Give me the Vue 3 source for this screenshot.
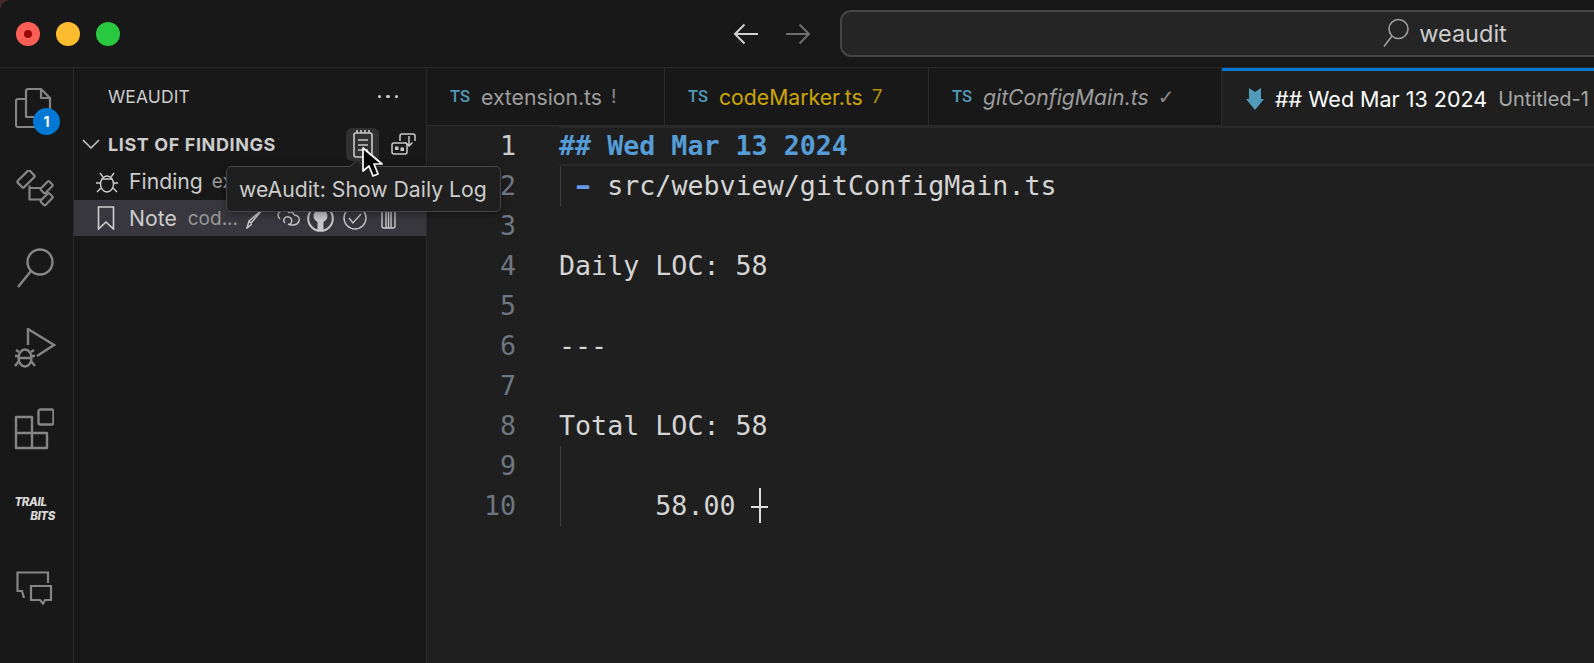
<script setup>
const tabs = [
  { name: 'extension.ts', mark: '!', kind: 'plain' },
  { name: 'codeMarker.ts', mark: '7', kind: 'warn' },
  { name: 'gitConfigMain.ts', mark: '✓', kind: 'preview' },
]
const lines = [
  { n: 1, text: '## Wed Mar 13 2024', kind: 'heading', active: true },
  { n: 2, text: 'src/webview/gitConfigMain.ts', kind: 'list', guide: true },
  { n: 3, text: '' },
  { n: 4, text: 'Daily LOC: 58' },
  { n: 5, text: '' },
  { n: 6, text: '---' },
  { n: 7, text: '' },
  { n: 8, text: 'Total LOC: 58' },
  { n: 9, text: '', guide: true },
  { n: 10, text: '      58.00', guide: true },
]
</script>

<template>
  <div class="window">
    <header class="titlebar">
      <div class="lights">
        <span class="light red"><i></i></span>
        <span class="light yellow"></span>
        <span class="light green"></span>
      </div>
      <svg class="arrow back" viewBox="0 0 26 22" fill="none" stroke="currentColor" stroke-width="2"><path d="M25 11H2M11.500 1.500 2 11l9.500 9.500"/></svg>
      <svg class="arrow fwd" viewBox="0 0 26 22" fill="none" stroke="currentColor" stroke-width="2"><path d="M1 11h23M14.500 1.500 24 11l-9.500 9.500"/></svg>
      <div class="search">
        <svg class="search-icon" viewBox="0 0 26 30" fill="none" stroke="currentColor" stroke-width="1.600"><circle cx="15.500" cy="11" r="9.500"/><path d="M9 18 1 28.500"/></svg>
        <span>weaudit</span>
      </div>
    </header>

    <div class="body">
      <nav class="activity">
        <div class="act files">
          <svg width="38" height="44" viewBox="0 0 38 44" fill="none" stroke="#858585" stroke-width="2.200" stroke-linejoin="round"><path d="M13 1h13l9 9v19H11V3a2 2 0 0 1 2-2zM26 1v9h9M11 11H3a2 2 0 0 0-2 2v24a2 2 0 0 0 2 2h20v-10"/></svg>
          <span class="badge">1</span>
        </div>
        <div class="act flow">
          <svg width="38" height="38" viewBox="0 0 38 38" fill="none" stroke="#858585" stroke-width="2.200" stroke-linejoin="round">
            <rect x="1.500" y="4.500" width="17" height="9" rx="1.500" transform="rotate(-45 10 9)"/>
            <rect x="24.500" y="14" width="12" height="6.500" rx="1.500" transform="rotate(-45 30.500 17)"/>
            <rect x="24.500" y="26" width="12" height="6.500" rx="1.500" transform="rotate(-45 30.500 29)"/>
            <path d="M13.500 15.500V29.500H25M13.500 18H26"/>
          </svg>
        </div>
        <div class="act lens">
          <svg width="38" height="42" viewBox="0 0 38 42" fill="none" stroke="#858585" stroke-width="2.400"><circle cx="24" cy="14" r="12.500"/><path d="M15 23 2 39"/></svg>
        </div>
        <div class="act debug">
          <svg width="42" height="42" viewBox="0 0 42 42" fill="none" stroke="#858585" stroke-width="2.400"><path d="M14 17V1l26 16-17 11"/><ellipse cx="11" cy="30" rx="6.500" ry="8.500"/><path d="M5 28H1M17 28h4M5 33l-4 5M17 33l4 5M5 24l-3-2M17 24l3-2M5 30h12"/></svg>
        </div>
        <div class="act ext">
          <svg width="40" height="42" viewBox="0 0 40 42" fill="none" stroke="#858585" stroke-width="2.400" stroke-linejoin="round"><path d="M2 9h16v16h15v15H2zM18 25v15M2 25h16"/><rect x="24.500" y="1.500" width="15" height="15" rx="2"/></svg>
        </div>
        <div class="act trail">
          <span class="t1">TRAIL</span>
          <span class="t2">BITS</span>
        </div>
        <div class="act chat">
          <svg width="38" height="36" viewBox="0 0 38 36" fill="none" stroke="#858585" stroke-width="2.200"><path d="M33 13V2.500H2.500V21H7l2 7M16 16h20v14h-6l-2 3.500-3-3.500h-9z"/></svg>
        </div>
      </nav>

      <aside class="sidebar">
        <div class="side-title">
          <span>WEAUDIT</span>
          <span class="dots"><i></i><i></i><i></i></span>
        </div>
        <div class="section">
          <svg class="chev" viewBox="0 0 18 10" fill="none" stroke="#c8c8c8" stroke-width="1.500"><path d="M1 1l8 8 8-8"/></svg>
          <span class="section-name">LIST OF FINDINGS</span>
          <span class="hover-btn">
            <svg width="20" height="28" viewBox="0 0 20 28" fill="none" stroke="#c8c8c8" stroke-width="1.600"><rect x="1" y="3" width="18" height="24" rx="2"/><path d="M5 10h10M5 15h10M5 20h10M4 0v3M8 0v3M12 0v3M16 0v3"/></svg>
          </span>
          <svg class="layout-btn" viewBox="0 0 25 22" fill="none" stroke="#c8c8c8" stroke-width="1.500"><path d="M9 8V3a2 2 0 0 1 2-2h11a2 2 0 0 1 2 2v5"/><rect x="1" y="10" width="15" height="11" rx="2"/><rect x="4" y="13.500" width="3.500" height="3.500" fill="#c8c8c8" stroke="none"/><rect x="9.500" y="14.500" width="3.500" height="3.500" fill="#c8c8c8" stroke="none"/><path d="M18 3v10M14.500 9.500l3.500 3.500 3.500-3.500"/></svg>
        </div>
        <div class="row first">
          <svg class="row-icon bug" viewBox="0 0 24 24" fill="none" stroke="#d0d0d0" stroke-width="1.400"><ellipse cx="12" cy="14" rx="6.500" ry="8"/><path d="M6.500 9h11M8 7l-3-4M16 7l3-4M5.500 13H1M18.500 13H23M6 18l-4 4M18 18l4 4"/></svg>
          <span class="row-name">Finding</span>
          <span class="row-sub">ex</span>
        </div>
        <div class="row selected">
          <svg class="row-icon mark" viewBox="0 0 18 24" fill="none" stroke="#d0d0d0" stroke-width="1.600"><path d="M1.500 1h15v22L9 16l-7.500 7z"/></svg>
          <span class="row-name">Note</span>
          <span class="row-sub">cod...</span>
          <span class="row-actions">
            <svg class="a-pen" width="21" height="22" viewBox="0 0 21 22" fill="none" stroke="#c8c8c8" stroke-width="1.500"><path d="M19 1 6 16l-2-2zM4 14l-2 7 5-4"/></svg>
            <svg class="a-link" width="23" height="18" viewBox="0 0 23 18" fill="none" stroke="#c8c8c8" stroke-width="1.400"><path d="M6 2c-3 0-5 2-5 4s1 3 2 4M11 4c3-2 6 0 6 2M8 14c-3-3 0-7 4-6 3 1 4 5 1 7M17 6c4 0 6 3 5 6-1 4-7 5-11 3"/></svg>
            <svg class="a-gh" width="27" height="27" viewBox="0 0 27 27"><circle cx="13.500" cy="13.500" r="12.300" fill="none" stroke="#c8c8c8" stroke-width="2"/><path d="M13.500 5c5 0 7 3 7 6 0 3-2 5-4 6v9h-6v-9c-2-1-4-3-4-6 0-3 2-6 7-6z" fill="#c8c8c8"/></svg>
            <svg class="a-check" width="24" height="24" viewBox="0 0 24 24" fill="none" stroke="#c8c8c8" stroke-width="1.400"><circle cx="12" cy="12" r="11"/><path d="M6 12l4 5 8-9"/></svg>
            <svg class="a-trash" width="17" height="22" viewBox="0 0 17 22" fill="none" stroke="#c8c8c8" stroke-width="1.400"><path d="M1 2h15M2 2v17a2 2 0 0 0 2 2h9a2 2 0 0 0 2-2V2M6 2v19M8.500 2v19M11 2v19"/></svg>
          </span>
        </div>
        <div class="tooltip">weAudit: Show Daily Log</div>
        <svg class="pointer" viewBox="0 0 24 32"><path d="M2 1v23l6-5 4 10 5-2-4-10h8z" fill="#000" stroke="#fff" stroke-width="1.700" stroke-linejoin="round"/></svg>
      </aside>

      <main class="main">
        <div class="tabs">
          <div v-for="t in tabs" :key="t.name" class="tab" :class="t.kind">
            <span class="ts">TS</span>
            <span class="tab-name">{{ t.name }}</span>
            <span class="tab-mark">{{ t.mark }}</span>
          </div>
          <div class="tab active">
            <svg class="dl" viewBox="0 0 18 22"><path d="M3 0l6 4 6-4v11h3l-9 11-9-11h3z" fill="#519aba"/></svg>
            <span class="tab-name">## Wed Mar 13 2024</span>
            <span class="tab-desc">Untitled-1</span>
          </div>
        </div>
        <div class="editor">
          <div v-for="l in lines" :key="l.n" class="line" :class="{ active: l.active }">
            <span class="num">{{ l.n }}</span>
            <span class="code" :class="[l.kind, { guide: l.guide }]"><template v-if="l.kind === 'list'">{{ ' ' }}<b class="dash">-</b>{{ ' ' }}</template>{{ l.text }}</span>
          </div>
          <span class="ibeam"></span>
        </div>
      </main>
    </div>
  </div>
</template>

<style>
html, body { margin: 0; background: #4a2a2a; overflow: hidden; }
</style>

<style scoped>
.window { width: 1594px; height: 663px; background: #181818; display: flex; flex-direction: column; overflow: hidden; font-family: Inter, "Liberation Sans", sans-serif; color: #ccc; border-top-left-radius: 10px; }
.titlebar { height: 68px; flex: none; box-sizing: border-box; display: flex; align-items: center; padding-left: 16px; border-bottom: 1px solid #2b2b2b; }
.lights { display: flex; gap: 16px; width: 717px; flex: none; }
.light { width: 24px; height: 24px; border-radius: 50%; display: flex; align-items: center; justify-content: center; }
.red { background: #ff5f57; }
.red i { width: 8px; height: 8px; border-radius: 50%; background: #9a0a05; }
.yellow { background: #febc2e; }
.green { background: #28c840; }
.arrow { width: 26px; height: 22px; flex: none; }
.back { color: #d0d0d0; }
.fwd { color: #6e6e6e; margin-left: 26px; }
.search { flex: none; width: 1210px; height: 47px; box-sizing: border-box; margin-left: 29px; background: #252525; border: 2px solid #454545; border-radius: 11px; display: flex; align-items: center; justify-content: center; gap: 10px; font-size: 23.500px; color: #ccc; margin-bottom: 1px; }
.search-icon { width: 26px; height: 30px; color: #a0a0a0; }
.body { flex: 1; display: flex; min-height: 0; }
.activity { width: 74px; flex: none; box-sizing: border-box; border-right: 1px solid #2b2b2b; display: flex; flex-direction: column; align-items: center; }
.act { position: relative; width: 73px; display: flex; justify-content: center; align-items: center; flex: none; box-sizing: border-box; }
.files { height: 44px; margin-top: 20px; justify-content: flex-start; padding-left: 15px; }
.badge { position: absolute; left: 33px; top: 20px; width: 27px; height: 27px; border-radius: 50%; background: #0078d4; color: #fff; font-size: 14px; font-weight: 700; display: flex; align-items: center; justify-content: center; }
.flow { margin-top: 38px; height: 38px; padding-right: 3px; }
.lens { margin-top: 40px; height: 42px; padding-right: 4px; }
.debug { margin-top: 38px; height: 42px; padding-right: 4px; }
.ext { margin-top: 38px; height: 42px; padding-right: 6px; }
.trail { margin-top: 45px; height: 28px; flex-direction: column; font-style: italic; font-weight: 800; color: #d8d8d8; font-size: 11.500px; line-height: 14px; letter-spacing: -.4px; }
.t1 { margin-right: 12px; }
.t2 { margin-left: 12px; }
.chat { margin-top: 47px; height: 36px; padding-right: 5px; }
.sidebar { width: 353px; flex: none; box-sizing: border-box; border-right: 1px solid #2b2b2b; position: relative; }
.side-title { height: 57px; box-sizing: border-box; padding: 0 28px 0 34px; display: flex; align-items: center; justify-content: space-between; font-size: 17.500px; color: #ccc; letter-spacing: .1px; }
.dots { display: flex; gap: 5px; }
.dots i { width: 3.500px; height: 3.500px; border-radius: 50%; background: #ccc; }
.section { height: 39px; box-sizing: border-box; padding-bottom: 1px; display: flex; align-items: center; padding-left: 8px; position: relative; }
.chev { width: 18px; height: 10px; flex: none; margin-right: 8px; }
.section-name { font-size: 18px; letter-spacing: .6px; font-weight: 700; color: #ccc; width: 238px; flex: none; white-space: nowrap; }
.hover-btn { width: 33px; height: 33px; background: #303030; border-radius: 6px; display: flex; align-items: center; justify-content: center; flex: none; }
.layout-btn { width: 25px; height: 22px; margin-left: 12px; flex: none; }
.row { height: 36px; box-sizing: border-box; display: flex; align-items: center; position: relative; font-size: 21.200px; }
.first { padding-bottom: 2px; }
.selected { background: #37373d; }
.row-icon { position: absolute; }
.bug { left: 21px; top: 6px; width: 24px; height: 24px; }
.mark { left: 23px; top: 6px; width: 18px; height: 24px; }
.row-name { margin-left: 55px; color: #ccc; }
.row-sub { margin-left: 11px; color: #999; font-size: 19px; }
.first .row-sub { margin-left: 9px; }
.row-actions { display: flex; align-items: center; margin-left: auto; padding-right: 29px; }
.a-link { margin-left: 11px; }
.a-gh { margin-left: 7px; }
.a-check { margin-left: 9px; }
.a-trash { margin-left: 13px; }
.tooltip { position: absolute; left: 152px; top: 98px; width: 275px; height: 46px; box-sizing: border-box; background: #1f1f1f; border: 1px solid #454545; border-radius: 5px; display: flex; align-items: center; padding-left: 12px; font-size: 21.200px; color: #ccc; box-shadow: 0 2px 8px rgba(0,0,0,.36); white-space: nowrap; }
.tooltip::before { content: ""; position: absolute; left: 125px; top: -6px; width: 10px; height: 10px; background: #1f1f1f; border-top: 1px solid #454545; border-left: 1px solid #454545; transform: rotate(45deg); }
.pointer { position: absolute; left: 287px; top: 79px; width: 24px; height: 32px; }
.main { flex: 1; min-width: 0; background: #1f1f1f; display: flex; flex-direction: column; }
.tabs { height: 58px; flex: none; display: flex; background: #181818; border-bottom: 1px solid #2b2b2b; box-sizing: border-box; }
.tab { box-sizing: border-box; display: flex; align-items: center; border-right: 1px solid #2b2b2b; padding-left: 23px; font-size: 21.200px; color: #9d9d9d; white-space: nowrap; flex: none; }
.tab:nth-child(1) { width: 238px; }
.tab:nth-child(2) { width: 264px; }
.tab:nth-child(3) { width: 293px; }
.ts { font-family: "Roboto", sans-serif; font-size: 16.500px; font-weight: 500; color: #519aba; width: 31px; flex: none; }
.warn { color: #cca700; }
.preview .tab-name { font-style: italic; }
.tab-mark { margin-left: 9px; font-size: 19px; opacity: .85; }
.preview .tab-mark { font-family: "DejaVu Sans", sans-serif; font-size: 20px; }
.active.tab { flex: 1; background: #1f1f1f; border-top: 3px solid #0078d4; color: #fff; padding-left: 24px; border-right: 0; margin-bottom: -1px; font-size: 21.500px; }
.dl { width: 18px; height: 22px; margin-right: 11px; flex: none; }
.tab-desc { color: #a8a8a8; font-size: 20px; margin-left: 11px; }
.editor { flex: 1; position: relative; font-family: "DejaVu Sans Mono", monospace; font-size: 26.670px; }
.line { height: 40px; display: flex; box-sizing: border-box; line-height: 40px; white-space: pre; }
.num { width: 89px; flex: none; text-align: right; color: #6e7681; }
.active .num { color: #ccc; }
.code { margin-left: 43px; color: #d4d4d4; flex: 1; position: relative; }
.active .code { box-shadow: inset 0 2px 0 #282828, inset 0 -2px 0 #282828; }
.code.guide::before { content: ""; position: absolute; left: 1px; top: 0; bottom: 0; width: 1px; background: #404040; }
.heading { font-weight: 700; color: #569cd6; }
.dash { display: inline-block; font-weight: 700; color: #6796e6; transform: scaleX(1.5); }
.ibeam { position: absolute; left: 332px; top: 362px; width: 2px; height: 35px; background: #ddd; }
.ibeam::after { content: ""; position: absolute; left: -8px; top: 18px; width: 17px; height: 2px; background: #ddd; }
</style>
